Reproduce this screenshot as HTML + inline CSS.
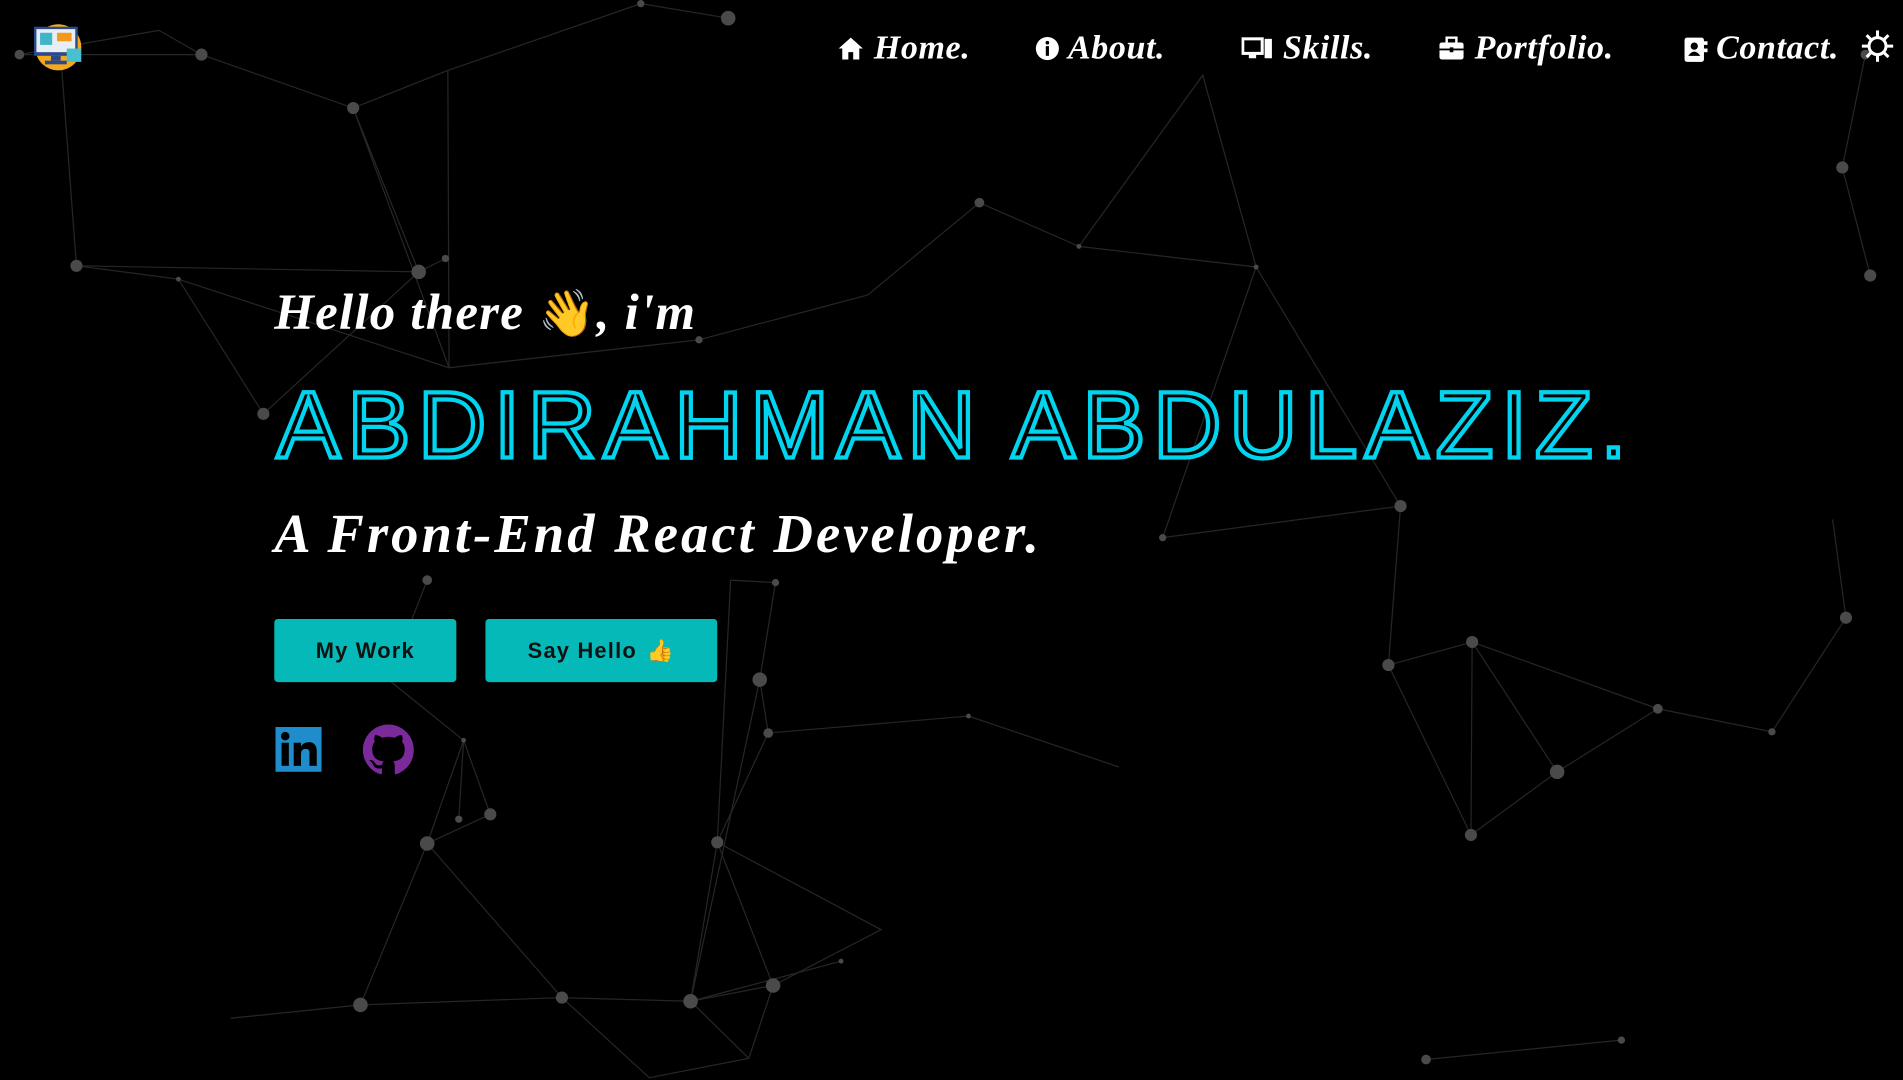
<!DOCTYPE html>
<html><head><meta charset="utf-8"><style>
html,body{margin:0;padding:0;background:#000;overflow:hidden;width:1903px;height:1080px}
#w{position:absolute;left:0;top:0;width:1568px;height:890px;transform:scale(1.21365);transform-origin:0 0;background:#000}
svg.bg{position:absolute;left:0;top:0}
.nav{position:absolute;top:24px;height:34px;color:#fff;font:italic bold 28px "Liberation Serif",serif;white-space:nowrap;letter-spacing:.5px}
.nav svg{position:absolute;top:6px}
.hello{position:absolute;left:226px;top:234px;color:#fff;font:italic bold 42px "Liberation Serif",serif;white-space:nowrap;letter-spacing:1px}
.name{position:absolute;left:228px;top:305px;font:400 78px "Liberation Sans",sans-serif;letter-spacing:6.2px;color:#000;-webkit-text-stroke:3.5px #00d4ee;white-space:nowrap}
.sub{position:absolute;left:226px;top:414px;color:#fff;font:italic bold 45px "Liberation Serif",serif;white-space:nowrap;letter-spacing:2.5px}
.btn{position:absolute;top:510px;height:52px;background:#06b9b9;border-radius:3px;color:#111;font:bold 18px "Liberation Sans",sans-serif;letter-spacing:1px;display:flex;align-items:center;justify-content:center}
</style></head><body><div id="w">
<svg class="bg" width="1568" height="890" viewBox="0 0 1568 890">
<g stroke="#262626" stroke-width="1" fill="none">
<polyline points="16,45 166,45 131,25 16,45"/><polyline points="166,45 291,89 369,58 370,303 291,89 345,224 367,213"/>
<polyline points="369,58 528,3 600,15"/><polyline points="63,219 147,230 217,341 345,224 63,219"/><polyline points="50,45 63,219"/>
<polyline points="147,230 370,303 576,280 715,243 807,167 889,203 991,62 1035,220 889,203"/>
<polyline points="1035,220 1154,417 958,443 1035,220"/><polyline points="1537,45 1518,138 1541,227"/>
<polyline points="1154,417 1144,548 1213,529 1283,636 1212,688 1144,548"/><polyline points="1213,529 1212,688"/>
<polyline points="1213,529 1366,584 1460,603 1521,509 1510,428"/><polyline points="1283,636 1366,584"/>
<polyline points="352,478 320,560 382,610 404,671 352,695 382,610 378,675"/><polyline points="602,478 639,480 626,560 633,604 591,694 602,478"/>
<polyline points="633,604 798,590 922,632"/><polyline points="591,694 726,766 637,812 569,825 591,694 637,812 617,872 535,888 463,822 569,825 617,872"/>
<polyline points="352,695 297,828 190,839"/><polyline points="297,828 463,822 352,695"/><polyline points="1175,873 1336,857"/>
<polyline points="626,560 569,825"/><polyline points="693,792 569,825"/>
</g>
<g fill="#4a4a4a">
<circle cx="16" cy="45" r="4"/><circle cx="166" cy="45" r="5"/><circle cx="291" cy="89" r="5"/><circle cx="528" cy="3" r="3"/><circle cx="600" cy="15" r="6"/>
<circle cx="63" cy="219" r="5"/><circle cx="147" cy="230" r="2"/><circle cx="217" cy="341" r="5"/><circle cx="345" cy="224" r="6"/><circle cx="367" cy="213" r="3"/>
<circle cx="576" cy="280" r="3"/><circle cx="807" cy="167" r="4"/><circle cx="889" cy="203" r="2"/><circle cx="1035" cy="220" r="2"/><circle cx="1154" cy="417" r="5"/>
<circle cx="958" cy="443" r="3"/><circle cx="1518" cy="138" r="5"/><circle cx="1541" cy="227" r="5"/><circle cx="1537" cy="45" r="4"/><circle cx="1521" cy="509" r="5"/>
<circle cx="1460" cy="603" r="3"/><circle cx="1366" cy="584" r="4"/><circle cx="1283" cy="636" r="6"/><circle cx="1213" cy="529" r="5"/><circle cx="1144" cy="548" r="5"/>
<circle cx="1212" cy="688" r="5"/><circle cx="352" cy="478" r="4"/><circle cx="639" cy="480" r="3"/><circle cx="626" cy="560" r="6"/><circle cx="633" cy="604" r="4"/>
<circle cx="798" cy="590" r="2"/><circle cx="382" cy="610" r="2"/><circle cx="404" cy="671" r="5"/><circle cx="378" cy="675" r="3"/><circle cx="352" cy="695" r="6"/>
<circle cx="591" cy="694" r="5"/><circle cx="637" cy="812" r="6"/><circle cx="569" cy="825" r="6"/><circle cx="463" cy="822" r="5"/><circle cx="297" cy="828" r="6"/>
<circle cx="1175" cy="873" r="4"/><circle cx="1336" cy="857" r="3"/><circle cx="693" cy="792" r="2"/>
</g></svg>
<svg style="position:absolute;left:25px;top:16px" width="46" height="44" viewBox="0 0 46 44">
<circle cx="23" cy="23" r="19" fill="#f5a81c"/><rect x="3" y="6" width="36" height="24" fill="#2b4a8a"/><rect x="5" y="8" width="32" height="19" fill="#e8eef5"/>
<rect x="8" y="11" width="10" height="10" fill="#3fb6c8"/><rect x="22" y="11" width="12" height="7" fill="#f39a1c"/><rect x="17" y="30" width="8" height="4" fill="#2b4a8a"/><rect x="12" y="34" width="18" height="3" fill="#2b4a8a"/><rect x="30" y="24" width="12" height="11" fill="#49c0d0"/></svg>
<div class="nav" style="left:690px"><svg width="22" height="20" viewBox="0 0 22 20"><path d="M11 1 L1 10 H4 V19 H9 V13 H13 V19 H18 V10 H21Z" fill="#fff"/></svg><span style="margin-left:30px">Home.</span></div>
<div class="nav" style="left:853px"><svg width="20" height="20" viewBox="0 0 20 20"><circle cx="10" cy="10" r="9.5" fill="#fff"/><rect x="8.7" y="8" width="2.6" height="8" fill="#000"/><circle cx="10" cy="5.2" r="1.5" fill="#000"/></svg><span style="margin-left:27px">About.</span></div>
<div class="nav" style="left:1023px"><svg width="26" height="20" viewBox="0 0 26 20"><rect x="1" y="2" width="16" height="12" fill="none" stroke="#fff" stroke-width="2.5"/><rect x="6" y="15" width="6" height="3" fill="#fff"/><rect x="19" y="2" width="6" height="16" fill="#fff"/></svg><span style="margin-left:34px">Skills.</span></div>
<div class="nav" style="left:1186px"><svg width="20" height="20" viewBox="0 0 20 20"><rect x="6" y="1" width="8" height="5" fill="none" stroke="#fff" stroke-width="2"/><rect x="0" y="5" width="20" height="14" rx="2" fill="#fff"/><rect x="0" y="10" width="20" height="1.5" fill="#000"/><rect x="8.5" y="9" width="3" height="4" fill="#000"/></svg><span style="margin-left:29px">Portfolio.</span></div>
<div class="nav" style="left:1387px"><svg width="20" height="22" viewBox="0 0 20 22"><rect x="1" y="1" width="16" height="20" rx="2" fill="#fff"/><circle cx="9" cy="8" r="3" fill="#000"/><path d="M4 16 Q9 9 14 16Z" fill="#000"/><rect x="17" y="4" width="3" height="3" fill="#fff"/><rect x="17" y="10" width="3" height="3" fill="#fff"/></svg><span style="margin-left:27px">Contact.</span></div>
<svg style="position:absolute;left:1534px;top:25px" width="26" height="26" viewBox="0 0 26 26"><g stroke="#fff" stroke-width="2.5"><line x1="13" y1="0" x2="13" y2="26"/><line x1="0" y1="13" x2="26" y2="13"/><line x1="4" y1="4" x2="22" y2="22"/><line x1="22" y1="4" x2="4" y2="22"/></g><circle cx="13" cy="13" r="7" fill="#000" stroke="#fff" stroke-width="2.5"/></svg>
<div class="hello">Hello there <span style="font-style:normal;font-family:'Noto Color Emoji','DejaVu Sans',sans-serif;font-size:38px;color:#f5c542">👋</span>, i'm</div>
<div class="name">ABDIRAHMAN ABDULAZIZ.</div>
<div class="sub">A Front-End React Developer.</div>
<div class="btn" style="left:226px;width:150px">My Work</div>
<div class="btn" style="left:400px;width:191px">Say Hello <span style="color:#f5c542;margin-left:8px">👍</span></div>
<svg style="position:absolute;left:227px;top:599px" width="38" height="37" viewBox="0 0 38 37"><rect width="38" height="37" fill="#1f8ccc"/><rect x="5" y="13" width="6" height="19" fill="#000"/><circle cx="8" cy="7.5" r="3.5" fill="#000"/><path d="M15 13H21V16Q23 12.5 28 12.5Q34 13 34 20V32H28V21Q28 18 25 18Q21 18 21 22V32H15Z" fill="#000"/></svg>
<svg style="position:absolute;left:299px;top:597px" width="42" height="42" viewBox="0 0 16 16"><path fill="#7a2a9a" d="M8 0C3.58 0 0 3.580 0 8c0 3.54 2.290 6.53 5.47 7.590.4.07.55-.17.55-.38 0-.19-.01-.82-.01-1.49-2.01.37-2.53-.49-2.69-.94-.09-.23-.48-.94-.82-1.130-.28-.15-.68-.52-.01-.53.63-.01 1.080.58 1.230.82.72 1.210 1.870.87 2.330.66.07-.52.28-.87.51-1.07-1.780-.2-3.640-.89-3.640-3.950 0-.87.31-1.590.82-2.150-.08-.2-.36-1.020.08-2.120 0 0 .67-.21 2.2.82.64-.18 1.320-.27 2-.27.68 0 1.360.09 2 .27 1.530-1.040 2.2-.82 2.2-.82.44 1.100.16 1.920.08 2.120.51.56.82 1.270.82 2.150 0 3.070-1.870 3.750-3.650 3.950.29.25.54.73.54 1.480 0 1.070-.01 1.930-.01 2.2 0 .21.15.46.55.38A8.013 8.013 0 0016 8c0-4.420-3.580-8-8-8z"/></svg>
</div></body></html>
